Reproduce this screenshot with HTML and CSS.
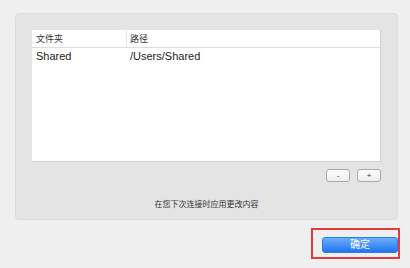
FILE: index.html
```html
<!DOCTYPE html>
<html lang="zh">
<head>
  <meta charset="UTF-8" />
  <title>共享文件夹</title>
  <link rel="stylesheet" href="styles.css">
</head>
<body>

<div class="panel">
  <div class="table">
    <div class="row head">
      <div class="col name">文件夹</div>
      <div class="col path">路径</div>
    </div>
    <div class="row">
      <div class="col name">Shared</div>
      <div class="col path">/Users/Shared</div>
    </div>
  </div>
  <div class="tools">
    <button class="small-btn">-</button>
    <button class="small-btn">+</button>
  </div>
  <p class="note">在您下次连接时应用更改内容</p>
</div>

<div class="footer">
  <div class="highlight">
    <button class="ok-btn">确定</button>
  </div>
</div>

</body>
</html>
```

FILE: styles.css
```css
body {
  font-family: "Liberation Sans", "Noto Sans CJK SC", sans-serif;
  margin: 0; padding: 0;
  background: #efefef;
  color: #222;
}
.panel {
  margin: 13px 0 0 15px;
  width: 383px;
  height: 207px;
  box-sizing: border-box;
  padding: 16px 16px 0 16px;
  background: #e4e4e4;
  border: 1px solid #dcdcdc;
  border-radius: 4px;
}
.table {
  height: 132px;
  background: white;
  border: 1px solid #cfcfcf;
  border-top: none;
  border-left: none;
  box-sizing: border-box;
}
.row {
  display: flex;
  height: 16px;
  align-items: center;
}
.row.head {
  height: 17px;
  border-bottom: 1px solid #dddddd;
  font-size: 9px;
  color: #333;
}
.col.name { width: 95px; padding-left: 4px; box-sizing: border-box; }
.col.path { padding-left: 3px; }
.head .col.name { border-right: 1px solid #e2e2e2; height: 100%; display: flex; align-items: center; }
.row:not(.head) { font-size: 11px; }
.tools {
  display: flex;
  justify-content: flex-end;
  gap: 7px;
  margin-top: 7px;
}
.small-btn {
  width: 24px;
  height: 13px;
  padding: 0;
  border: 1px solid #a8a8a8;
  border-radius: 3px;
  background: linear-gradient(#fcfcfc, #eeeeee);
  font-family: inherit;
  font-size: 8px;
  line-height: 10px;
  color: #333;
}
.note {
  margin: 16px 0 0 0;
  text-align: center;
  font-size: 8px;
  color: #333;
}
.footer {
  display: flex;
  justify-content: flex-end;
  padding: 8px 10px 0 0;
}
.highlight {
  width: 89px;
  height: 31px;
  box-sizing: border-box;
  border: 2px solid #e0393e;
  padding: 7px 0 0 9px;
}
.ok-btn {
  width: 76px;
  height: 16px;
  padding: 0;
  border: 1px solid #2c7ce8;
  border-radius: 3px;
  background: linear-gradient(#6cb0fb, #1f74f0);
  color: white;
  font-family: inherit;
  font-size: 10px;
  line-height: 14px;
  display: block;
}
```
